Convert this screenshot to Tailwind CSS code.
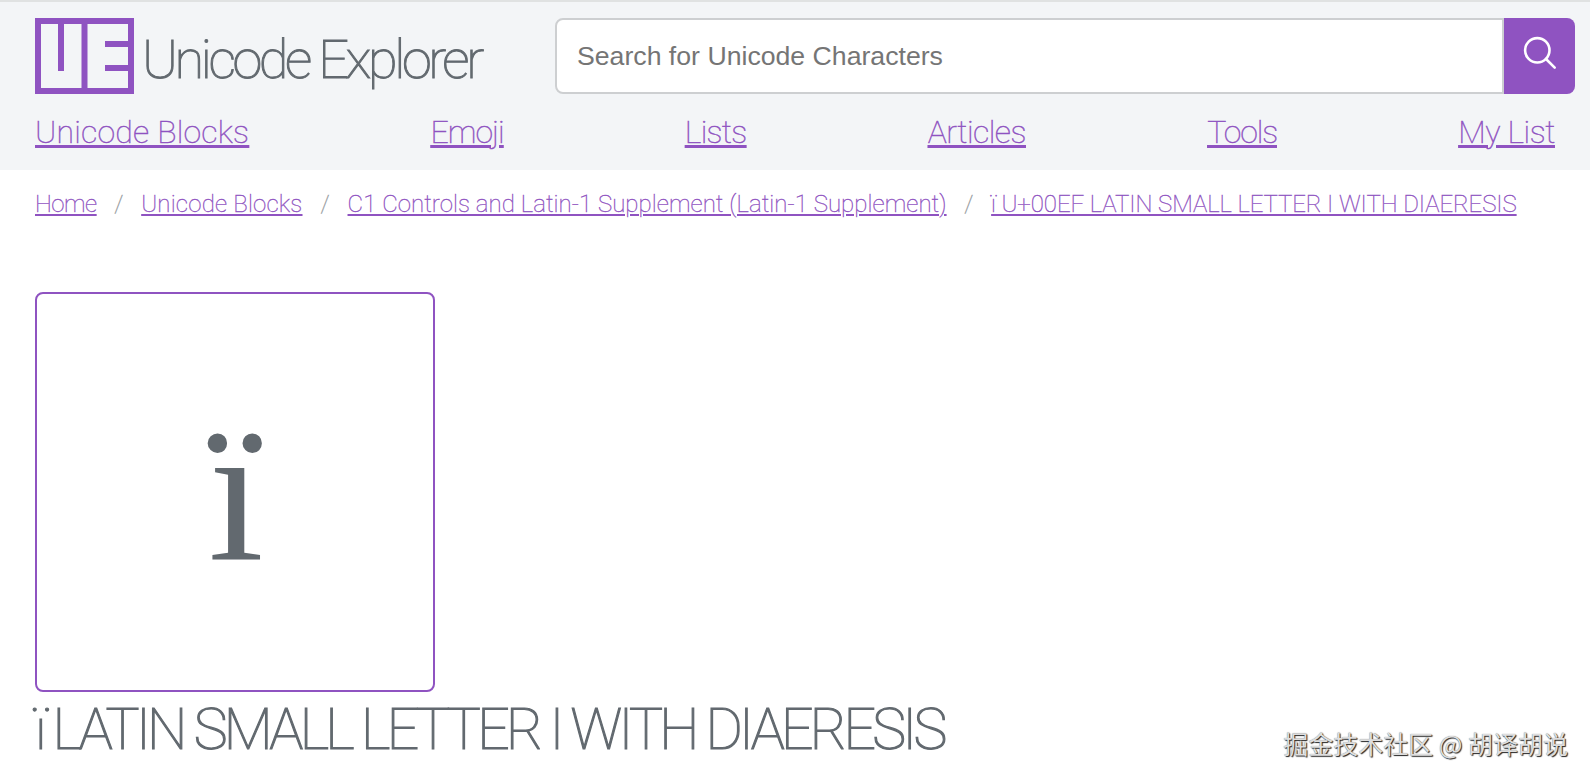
<!DOCTYPE html>
<html lang="en">
<head>
    <meta charset="UTF-8">
    <meta name="viewport" content="width=device-width, initial-scale=1.0">
    <title>ï LATIN SMALL LETTER I WITH DIAERESIS - Unicode Explorer</title>
    <script src="https://cdn.jsdelivr.net/npm/@tailwindcss/browser@4"></script>
</head>
<body class="h-screen overflow-hidden bg-white font-[Roboto,sans-serif] font-[240] text-[#62696f]">
    <header class="h-[170px] border-t-2 border-[#e0e2e2] bg-[#f3f5f7] pt-4 pl-[35px]">
        <div class="flex h-[76px] pr-[15px]">
            <a href="#" class="flex w-[520px] shrink-0">
                <svg class="h-[76px] w-[99px] shrink-0" viewBox="0 0 99 76" fill="none" stroke="#8f53c1" stroke-width="6">
                    <path d="M3 3H96V73H3ZM49.5 3V73M26 3V53M70 26H96M70 50H96" />
                </svg>
                <span class="ml-2 mt-[10px] whitespace-nowrap text-[54px] leading-[64px] tracking-[-3.4px] [-webkit-text-stroke:1px]">Unicode Explorer</span>
            </a>
            <form class="flex grow">
                <input type="text" placeholder="Search for Unicode Characters" class="h-[76px] grow rounded-l-lg border-2 border-[#cdcfd1] bg-white px-5 font-['Liberation_Sans',Arial,sans-serif] text-[26.67px] font-normal placeholder:text-[#757575]">
                <button type="button" class="flex w-[71px] justify-center rounded-r-lg bg-[#8f53c1] pt-[18px]">
                    <svg class="h-[34px] w-[34px]" viewBox="0 0 34 34" fill="none" stroke="#fff" stroke-width="2.6" stroke-linecap="round">
                        <circle cx="14.3" cy="14.3" r="12.2" />
                        <path d="M23 23L31.7 31.7" />
                    </svg>
                </button>
            </form>
        </div>
        <nav class="mt-[19px] mr-[35px] flex justify-between text-[32px] leading-[38px] text-[#8f53c1] underline decoration-[3px] underline-offset-[2px] [-webkit-text-stroke:0.45px]">
            <a href="#" class="tracking-[0.2px]">Unicode Blocks</a>
            <a href="#" class="tracking-[-1px]">Emoji</a>
            <a href="#" class="tracking-[-0.7px]">Lists</a>
            <a href="#" class="tracking-[-0.5px]">Articles</a>
            <a href="#" class="tracking-[-1.1px]">Tools</a>
            <a href="#" class="tracking-[-0.4px]">My List</a>
        </nav>
    </header>

    <main class="pl-[35px]">
        <ol class="mt-[19px] flex whitespace-nowrap text-[24px] leading-[30px] text-[#8f53c1] [-webkit-text-stroke:0.35px]">
            <li><a href="#" class="tracking-[-0.5px] underline decoration-2 underline-offset-[2px]">Home</a></li>
            <li class="w-[44.5px] text-center text-[#989c9f]">/</li>
            <li><a href="#" class="tracking-[0.2px] underline decoration-2 underline-offset-[2px]">Unicode Blocks</a></li>
            <li class="w-[45px] text-center text-[#989c9f]">/</li>
            <li><a href="#" class="tracking-[0.06px] underline decoration-2 underline-offset-[2px]">C1 Controls and Latin-1 Supplement (Latin-1 Supplement)</a></li>
            <li class="w-[44.5px] text-center text-[#989c9f]">/</li>
            <li><a href="#" class="tracking-[-0.08px] underline decoration-2 underline-offset-[2px]">ï U+00EF LATIN SMALL LETTER I WITH DIAERESIS</a></li>
        </ol>

        <div class="mt-[73px] flex h-[400px] w-[400px] items-center justify-center rounded-lg border-2 border-[#8f53c1] pl-0.5 font-['Liberation_Serif',serif] text-[200px] leading-none font-normal">ï</div>

        <h1 class="mt-1 whitespace-nowrap text-[57px] leading-[68px] tracking-[-3.7px] [-webkit-text-stroke:1.2px]">ï LATIN SMALL LETTER I WITH DIAERESIS</h1>
    </main>

    <!-- watermark -->
    <div class="absolute right-[22px] bottom-[21px] whitespace-nowrap font-['Noto_Sans_CJK_SC',sans-serif] text-[25px] leading-9 font-normal text-[#dedede] [text-shadow:1px_1px_1px_#222,0_0_1px_#777]">掘金技术社区 @ 胡译胡说</div>
</body>
</html>
